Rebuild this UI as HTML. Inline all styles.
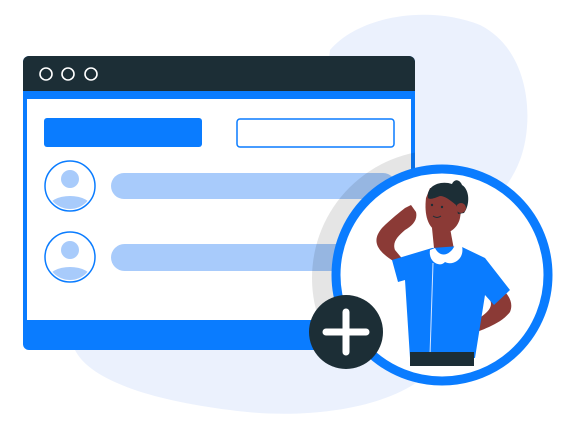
<!DOCTYPE html>
<html><head><meta charset="utf-8"><style>html,body{margin:0;padding:0;background:#fff;width:585px;height:427px;overflow:hidden}</style></head><body>
<svg width="585" height="427" viewBox="0 0 585 427" xmlns="http://www.w3.org/2000/svg">
<path d="M330 50 C360 15 430 5 480 25 C530 50 535 120 520 160 C505 200 470 220 450 240 L420 380 C380 410 300 420 230 410 C150 400 90 380 75 350 L300 330 Z" fill="#ebf1fd"/>
<rect x="23" y="56" width="392" height="294" rx="6" fill="#0a7cff"/>
<rect x="27" y="99" width="384" height="221" fill="#fff"/>
<path d="M29 56 H409 A6 6 0 0 1 415 62 V91 H23 V62 A6 6 0 0 1 29 56 Z" fill="#1c2e36"/>
<circle cx="46" cy="74" r="6" fill="none" stroke="#fff" stroke-width="1.6"/>
<circle cx="68" cy="74" r="6" fill="none" stroke="#fff" stroke-width="1.6"/>
<circle cx="91" cy="74" r="6" fill="none" stroke="#fff" stroke-width="1.6"/>
<rect x="44" y="118" width="158" height="29" rx="3" fill="#0a7cff"/>
<rect x="237" y="119" width="157" height="28" rx="3" fill="#fff" stroke="#0a7cff" stroke-width="1.5"/>
<g>
<circle cx="70" cy="186" r="25" fill="#fff" stroke="#0a7cff" stroke-width="1.5"/>
<clipPath id="c1"><circle cx="70" cy="186" r="23"/></clipPath>
<circle cx="70" cy="179" r="9" fill="#a8cbfb"/>
<ellipse cx="70" cy="208" rx="22" ry="12" fill="#a8cbfb" clip-path="url(#c1)"/>
<circle cx="70" cy="257" r="25" fill="#fff" stroke="#0a7cff" stroke-width="1.5"/>
<clipPath id="c2"><circle cx="70" cy="257" r="23"/></clipPath>
<circle cx="70" cy="250" r="9" fill="#a8cbfb"/>
<ellipse cx="70" cy="279" rx="22" ry="12" fill="#a8cbfb" clip-path="url(#c2)"/>
</g>
<rect x="111" y="173" width="285" height="26" rx="13" fill="#a8cbfb"/>
<rect x="111" y="244" width="285" height="27" rx="13.5" fill="#a8cbfb"/>
<clipPath id="wc"><rect x="23" y="99" width="392" height="251"/></clipPath>
<circle cx="440" cy="278" r="128" fill="#000" fill-opacity="0.1" clip-path="url(#wc)"/>
<circle cx="442" cy="275" r="106" fill="#fff" stroke="#0a7cff" stroke-width="9"/>
<clipPath id="pc"><circle cx="442" cy="275" r="102"/></clipPath>
<g clip-path="url(#pc)">
<path d="M395 262 C375 250 372 240 382 228 C392 218 400 212 405 208 L411 205 L416 212 C418 220 412 226 405 230 C398 236 392 242 395 250 L405 262 Z" fill="#8b3a36"/>
<path d="M492 280 C505 290 515 300 510 312 C500 325 480 330 470 335 L462 340 L458 330 L466 326 C480 318 495 310 490 300 Z" fill="#8b3a36"/>
<path d="M432 228 L450 228 L455 255 L435 258 Z" fill="#8b3a36"/>
<path d="M392 260 L432 248 L460 246 L485 258 L510 290 L494 305 L485 295 L475 358 L410 358 L405 280 L398 282 Z" fill="#0a7cff"/>
<path d="M430 250 C428 262 440 268 445 262 C452 266 465 260 462 246 L455 245 C450 256 440 258 435 248 Z" fill="#fff"/>
<path d="M433 263 L430 355" stroke="#d6e6ff" stroke-width="1" fill="none"/>
<path d="M410 352 L474 352 L474 366 L410 366 Z" fill="#1c2e36"/>
<path d="M426 198 C424 215 428 228 438 232 C448 236 458 228 460 218 L462 205 L455 190 L430 188 Z" fill="#8b3a36"/>
<path d="M428 198 C426 186 440 180 452 184 C455 178 460 180 462 185 C470 190 470 205 464 213 L458 214 L456 205 C450 200 445 196 440 196 C435 198 430 200 428 198 Z" fill="#1c2e36"/>
<circle cx="461" cy="208" r="5" fill="#8b3a36"/>
<circle cx="432" cy="205" r="1.2" fill="#1c2e36"/>
<circle cx="442" cy="207" r="1.2" fill="#1c2e36"/>
<path d="M433 216 Q437 219 441 216" stroke="#1c2e36" stroke-width="1" fill="none"/>
</g>
<circle cx="346" cy="332" r="37" fill="#1c2e36"/>
<path d="M346 312 V352 M326 332 H366" stroke="#fff" stroke-width="7" stroke-linecap="round"/>
</svg>
</body></html>
